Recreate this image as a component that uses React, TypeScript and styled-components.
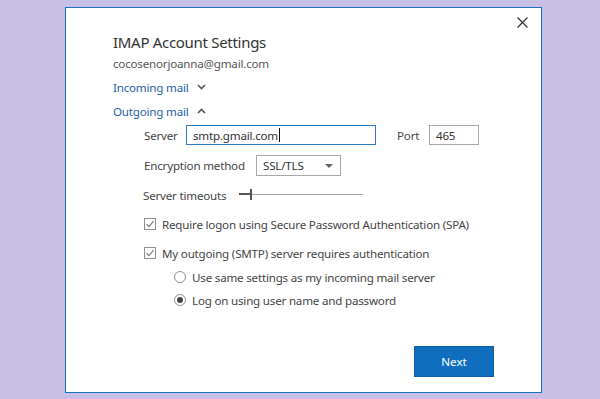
import React from "react";
import styled, { createGlobalStyle } from "styled-components";

const GlobalStyle = createGlobalStyle`
  html, body {
    margin: 0;
    padding: 0;
    background: #c7bfe4;
  }
  body {
    font-family: "Noto Sans", "Open Sans", "DejaVu Sans", sans-serif;
    color: #444;
  }
`;

const Dialog = styled.div`
  position: relative;
  box-sizing: border-box;
  margin: 7px 0 0 65px;
  width: 477px;
  height: 386px;
  background: #fff;
  border: 1px solid #1a6fc4;
  padding: 22px 0 0 47px;
`;

const Close = styled.button`
  position: absolute;
  top: 3px;
  right: 8px;
  width: 22px;
  height: 22px;
  padding: 0;
  border: 0;
  background: transparent;
  display: flex;
  align-items: center;
  justify-content: center;
`;

const Title = styled.div`
  height: 24px;
  line-height: 24px;
  font-size: 15px;
  color: #333;
  letter-spacing: -0.3px;
`;

const Line = styled.div<{ top?: number; indent?: number; h?: number }>`
  display: flex;
  align-items: center;
  height: ${p => p.h ?? 18}px;
  margin-top: ${p => p.top ?? 0}px;
  margin-left: ${p => p.indent ?? 0}px;
  font-size: 11.6px;
  letter-spacing: -0.2px;
  white-space: nowrap;
`;

const Email = styled(Line)`
  color: #555;
`;

const Toggle = styled(Line)`
  color: #1f5fa6;
  gap: 8px;
`;

const Label = styled.span<{ w?: number; gap?: number }>`
  display: inline-block;
  width: ${p => (p.w ? `${p.w}px` : "auto")};
  margin-left: ${p => p.gap ?? 0}px;
  color: #444;
`;

const TextBox = styled.div<{ w: number; focused?: boolean }>`
  box-sizing: border-box;
  width: ${p => p.w}px;
  height: 20px;
  border: 1px solid ${p => (p.focused ? "#2b78c5" : "#a8a8a8")};
  padding: 0 6px;
  display: flex;
  align-items: center;
  color: #333;
`;

const Caret = styled.span`
  display: inline-block;
  width: 1px;
  height: 14px;
  background: #111;
  margin-left: 1px;
`;

const Select = styled.div`
  box-sizing: border-box;
  width: 85px;
  height: 21px;
  border: 1px solid #a8a8a8;
  padding: 0 7px 0 6px;
  display: flex;
  align-items: center;
  justify-content: space-between;
  color: #333;
`;

const Arrow = styled.span`
  width: 0;
  height: 0;
  border-left: 4px solid transparent;
  border-right: 4px solid transparent;
  border-top: 4px solid #666;
`;

const Slider = styled.div`
  position: relative;
  width: 124px;
  height: 12px;
  &::before {
    content: "";
    position: absolute;
    left: 0;
    right: 0;
    top: 5px;
    height: 1px;
    background: #a0a0a0;
  }
  &::after {
    content: "";
    position: absolute;
    left: 0;
    width: 12px;
    top: 4px;
    height: 2px;
    background: #555;
  }
`;

const Thumb = styled.span`
  position: absolute;
  left: 11px;
  top: 0;
  width: 2px;
  height: 11px;
  background: #555;
  z-index: 1;
`;

const Box = styled.span`
  box-sizing: border-box;
  width: 12px;
  height: 12px;
  border: 1px solid #8f8f8f;
  display: inline-flex;
  align-items: center;
  justify-content: center;
  margin-right: 6px;
  background: #fff;
`;

const Radio = styled.span<{ checked?: boolean }>`
  box-sizing: border-box;
  width: 12px;
  height: 12px;
  border-radius: 50%;
  border: 1px solid #8f8f8f;
  margin-right: 6px;
  display: inline-flex;
  align-items: center;
  justify-content: center;
  &::after {
    content: "";
    width: 6px;
    height: 6px;
    border-radius: 50%;
    background: ${p => (p.checked ? "#444" : "transparent")};
  }
`;

const Footer = styled.div`
  display: flex;
  justify-content: flex-end;
  margin-top: 37px;
  padding-right: 47px;
`;

const NextButton = styled.button`
  box-sizing: border-box;
  width: 80px;
  height: 31px;
  background: #106ebe;
  border: 1px solid #0d5ea6;
  color: #fff;
  font-family: inherit;
  font-size: 11.6px;
  padding: 0;
`;

const Chevron: React.FC<{ up?: boolean }> = ({ up }) => (
  <svg width="9" height="6" viewBox="0 0 9 6">
    <path
      d={up ? "M1 5 L4.5 1.5 L8 5" : "M1 1 L4.5 4.5 L8 1"}
      fill="none"
      stroke="#555"
      strokeWidth="1.6"
    />
  </svg>
);

const Check: React.FC = () => (
  <svg width="10" height="10" viewBox="0 0 10 10">
    <path d="M1.5 5.2 L4 7.6 L8.6 2.2" fill="none" stroke="#777" strokeWidth="1.1" />
  </svg>
);

export default function App() {
  return (
    <>
      <GlobalStyle />
      <Dialog>
        <Close aria-label="Close">
          <svg width="11" height="11" viewBox="0 0 11 11">
            <path d="M0.5 0.5 L10.5 10.5 M10.5 0.5 L0.5 10.5" stroke="#333" strokeWidth="1.2" />
          </svg>
        </Close>
        <Title>IMAP Account Settings</Title>
        <Email>cocosenorjoanna@gmail.com</Email>
        <Toggle top={6}>
          Incoming mail <Chevron />
        </Toggle>
        <Toggle top={6}>
          Outgoing mail <Chevron up />
        </Toggle>
        <Line top={5} indent={31} h={20}>
          <Label w={42}>Server</Label>
          <TextBox w={190} focused>
            smtp.gmail.com<Caret />
          </TextBox>
          <Label gap={21} w={32}>Port</Label>
          <TextBox w={50}>465</TextBox>
        </Line>
        <Line top={10} indent={31} h={21}>
          <Label w={112}>Encryption method</Label>
          <Select>
            SSL/TLS <Arrow />
          </Select>
        </Line>
        <Line top={10} indent={30} h={18}>
          <Label w={96}>Server timeouts</Label>
          <Slider>
            <Thumb />
          </Slider>
        </Line>
        <Line top={11} indent={31}>
          <Box>
            <Check />
          </Box>
          Require logon using Secure Password Authentication (SPA)
        </Line>
        <Line top={11} indent={31}>
          <Box>
            <Check />
          </Box>
          My outgoing (SMTP) server requires authentication
        </Line>
        <Line top={6} indent={61}>
          <Radio />
          Use same settings as my incoming mail server
        </Line>
        <Line top={5} indent={61}>
          <Radio checked />
          Log on using user name and password
        </Line>
        <Footer>
          <NextButton>Next</NextButton>
        </Footer>
      </Dialog>
    </>
  );
}
